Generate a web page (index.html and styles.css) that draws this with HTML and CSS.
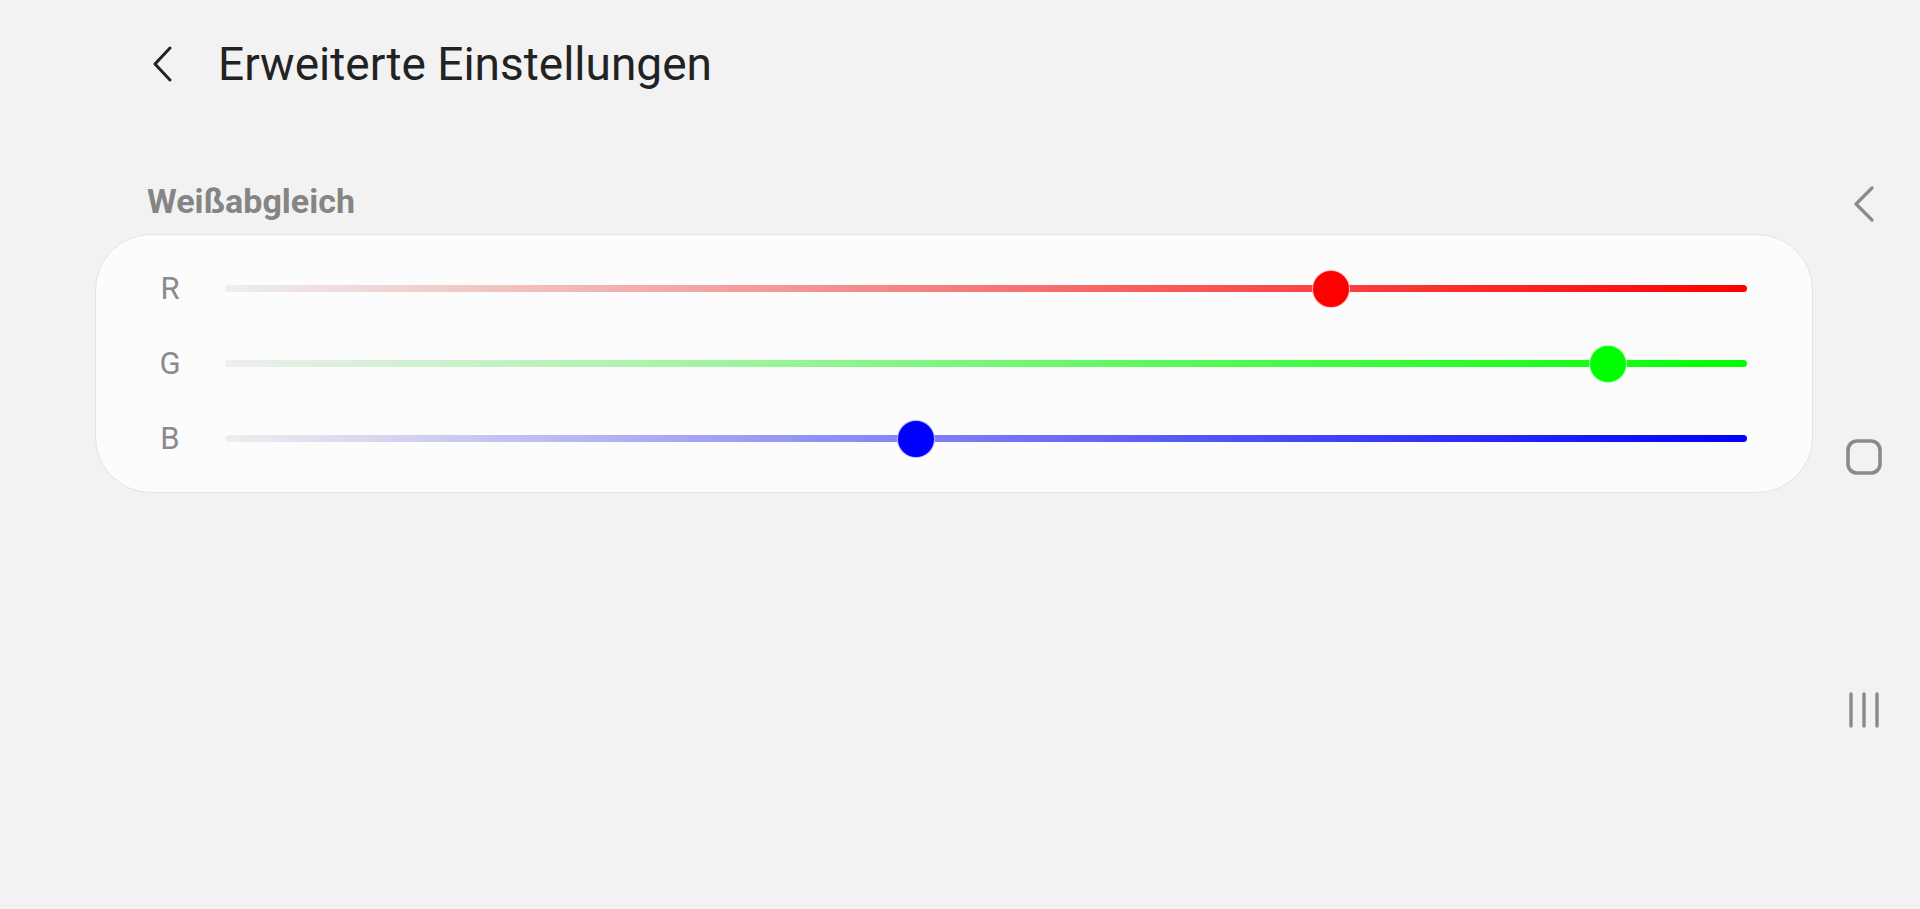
FILE: index.html
```html
<!DOCTYPE html>
<html lang="de">
<head>
  <meta charset="UTF-8">
  <meta name="viewport" content="width=device-width, initial-scale=1.0">
  <title>Erweiterte Einstellungen</title>
  <link rel="stylesheet" href="styles.css">
</head>
<body>

  <div class="screen">
    <div class="header">
      <svg class="back" width="24" height="36" viewBox="0 0 24 36">
        <polyline points="19,2 4,18 19,34" fill="none" stroke="#222" stroke-width="3" stroke-linecap="round" stroke-linejoin="round"/>
      </svg>
      <h1>Erweiterte Einstellungen</h1>
    </div>

    <h2 class="section-title">Weißabgleich</h2>

    <div class="card">
      <div class="slider-row">
        <span class="channel">R</span>
        <div class="track red" style="--v: 72.7">
          <span class="thumb"></span>
        </div>
      </div>
      <div class="slider-row">
        <span class="channel">G</span>
        <div class="track green" style="--v: 90.9">
          <span class="thumb"></span>
        </div>
      </div>
      <div class="slider-row">
        <span class="channel">B</span>
        <div class="track blue" style="--v: 45.4">
          <span class="thumb"></span>
        </div>
      </div>
    </div>
  </div>

  <div class="navbar">
    <svg width="40" height="40" viewBox="0 0 40 40">
      <polyline points="28,4 12,20 28,36" fill="none" stroke="#8a8a8a" stroke-width="3.2" stroke-linecap="round" stroke-linejoin="round"/>
    </svg>
    <svg width="40" height="40" viewBox="0 0 40 40">
      <rect x="4" y="4" width="32" height="32" rx="9" fill="none" stroke="#8a8a8a" stroke-width="3.6"/>
    </svg>
    <svg width="40" height="40" viewBox="0 0 40 40">
      <line x1="7" y1="4" x2="7" y2="36" stroke="#8a8a8a" stroke-width="3.4" stroke-linecap="round"/>
      <line x1="20" y1="4" x2="20" y2="36" stroke="#8a8a8a" stroke-width="3.4" stroke-linecap="round"/>
      <line x1="33" y1="4" x2="33" y2="36" stroke="#8a8a8a" stroke-width="3.4" stroke-linecap="round"/>
    </svg>
  </div>

</body>
</html>
```

FILE: styles.css
```css
body {
  margin: 0;
  height: 909px;
  display: flex;
  background-color: #f2f2f2;
  font-family: Roboto, "Noto Sans", sans-serif;
  overflow: hidden;
}

.screen {
  flex: 1;
  padding-left: 95px;
}

.header {
  height: 128px;
  display: flex;
  align-items: center;
  padding-left: 56px;
}

.header .back {
  margin-right: 43px;
}

.header h1 {
  margin: 0;
  font-size: 46px;
  font-weight: 400;
  color: #222;
}

.section-title {
  margin: 53px 0 13px 52px;
  font-size: 34px;
  line-height: 40px;
  font-weight: 700;
  color: #858585;
}

.card {
  background-color: #fcfcfc;
  border: 1px solid #e4e4e4;
  border-radius: 56px;
  padding: 16px 65px 16px 55px;
}

.slider-row {
  height: 75px;
  display: flex;
  align-items: center;
}

.channel {
  width: 38px;
  margin-right: 36px;
  text-align: center;
  font-size: 31px;
  color: #8a8a8a;
}

.track {
  flex: 1;
  height: 7px;
  border-radius: 4px;
  position: relative;
}

.track.red {
  background: linear-gradient(to right, #eeeeee, #ff0000);
}

.track.green {
  background: linear-gradient(to right, #eeeeee, #00ff00);
}

.track.blue {
  background: linear-gradient(to right, #eeeeee, #0000ff);
}

.thumb {
  position: absolute;
  top: 50%;
  left: calc(var(--v) * 1%);
  width: 36px;
  height: 36px;
  border-radius: 50%;
  border: 1px solid rgba(255, 255, 255, 0.7);
  transform: translate(-50%, -50%);
}

.red .thumb {
  background-color: #ff0000;
}

.green .thumb {
  background-color: #00ff00;
}

.blue .thumb {
  background-color: #0000ff;
}

.navbar {
  width: 102px;
  padding-right: 5px;
  padding-top: 4px;
  display: flex;
  flex-direction: column;
  align-items: center;
  justify-content: center;
  gap: 213px;
}
```
